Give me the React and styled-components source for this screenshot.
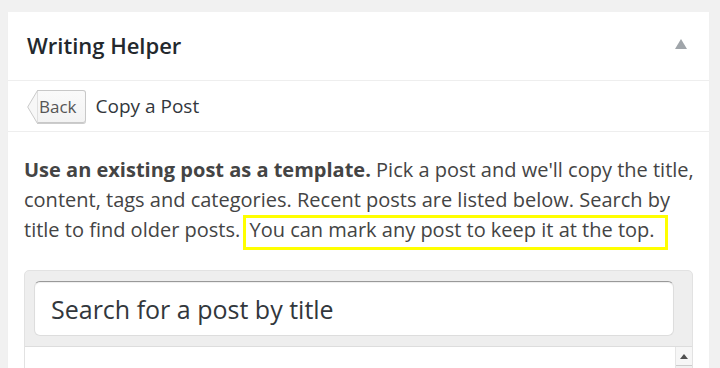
import styled, { createGlobalStyle } from "styled-components";

const GlobalStyle = createGlobalStyle`
  html, body {
    margin: 0;
    padding: 0;
    background: #f1f1f1;
    overflow: hidden;
  }
  body {
    font-family: "Open Sans", "Noto Sans", sans-serif;
    color: #444;
  }
`;

export default function App() {
  return (
    <>
      <GlobalStyle />
      <Page>
        <Panel>
          <Header>
            <Title>Writing Helper</Title>
            <Toggle aria-label="collapse" />
          </Header>
          <Nav>
            <BackButton>
              <BackArrow viewBox="0 0 11 35" preserveAspectRatio="none">
                <polygon points="11,0.5 10.5,0.5 0.7,17.5 10.5,34.5 11,34.5" fill="#f7f7f7" stroke="#c8c8c8" strokeWidth="1" />
              </BackArrow>
              Back
            </BackButton>
            <NavTitle>Copy a Post</NavTitle>
          </Nav>
          <Body>
            <Intro>
              <strong>Use an existing post as a template.</strong> Pick a post and
              we'll copy the title, content, tags and categories. Recent posts are
              listed below. Search by title to find older posts.{" "}
              <Highlight>You can mark any post to keep it at the top.</Highlight>
            </Intro>
            <SearchBox>
              <SearchBar>
                <SearchInput placeholder="Search for a post by title" />
              </SearchBar>
              <List>
                <Scrollbar>
                  <ScrollButton />
                </Scrollbar>
              </List>
            </SearchBox>
          </Body>
        </Panel>
      </Page>
    </>
  );
}

const Page = styled.div`
  padding: 12px 11px 0 8px;
`;

const Panel = styled.div`
  background: #fff;
  box-shadow: 0 1px 1px rgba(0, 0, 0, 0.04);
  min-height: 400px;
`;

const Header = styled.div`
  height: 68px;
  display: flex;
  align-items: center;
  justify-content: space-between;
  padding: 0 22px 0 19px;
  border-bottom: 1px solid #eee;
`;

const Title = styled.h2`
  margin: 0;
  font-size: 22px;
  font-weight: 600;
  color: #23282d;
  padding-bottom: 2px;
`;

const Toggle = styled.span`
  width: 0;
  height: 0;
  border-left: 6.5px solid transparent;
  border-right: 6.5px solid transparent;
  border-bottom: 10px solid #a0a5aa;
  margin-bottom: 4px;
`;

const Nav = styled.div`
  height: 50px;
  display: flex;
  align-items: center;
  gap: 10px;
  padding-left: 19px;
  border-bottom: 1px solid #eee;
`;

const BackButton = styled.span`
  position: relative;
  margin-left: 10px;
  height: 33px;
  box-sizing: border-box;
  display: inline-flex;
  align-items: center;
  padding: 0 8px 0 2px;
  border: 1px solid #c8c8c8;
  border-left: none;
  border-radius: 0 3px 3px 0;
  background: linear-gradient(#fafafa, #f3f3f3);
  box-shadow: 0 1px 0 #ccc;
  color: #555;
  font-size: 17px;
  margin-top: 1px;
`;

const BackArrow = styled.svg`
  position: absolute;
  left: -10px;
  top: -1px;
  width: 11px;
  height: 34px;
`;

const NavTitle = styled.span`
  font-size: 19px;
  color: #32373c;
`;

const Body = styled.div`
  padding: 23px 16px 0 16px;
`;

const Intro = styled.p`
  margin: 0 -14px 20px 0;
  font-size: 20px;
  line-height: 30px;
  color: #444;
  strong {
    font-weight: 700;
  }
`;

const Highlight = styled.span`
  display: inline-block;
  line-height: 24px;
  border: 3px solid #ffff00;
  padding: 0 10px 5px 3px;
  margin-left: -2px;
`;

const SearchBox = styled.div`
  background: #eee;
  border: 1px solid #e2e2e2;
  border-radius: 5px 5px 0 0;
`;

const SearchBar = styled.div`
  padding: 10px 18px 10px 9px;
`;

const SearchInput = styled.input`
  display: block;
  width: 100%;
  box-sizing: border-box;
  height: 55px;
  border: 1px solid #ddd;
  border-top-color: #999;
  border-radius: 6px;
  background: #fff;
  padding: 0 16px;
  font-family: "Open Sans", "Noto Sans", sans-serif;
  font-size: 25px;
  color: #32373c;
  outline: none;
  box-shadow: inset 0 1px 1px rgba(0, 0, 0, 0.07);
  &::placeholder {
    color: #32373c;
    opacity: 1;
  }
`;

const List = styled.div`
  background: #fff;
  height: 120px;
  border-top: 1px solid #ddd;
  display: flex;
  justify-content: flex-end;
`;

const Scrollbar = styled.div`
  width: 16px;
  background: #f1f1f1;
  border-left: 1px solid #e5e5e5;
`;

const ScrollButton = styled.div`
  height: 18px;
  border-bottom: 1px solid #ccc;
  background: #f6f6f6;
  display: flex;
  align-items: center;
  justify-content: center;
  &::after {
    content: "";
    border-left: 4px solid transparent;
    border-right: 4px solid transparent;
    border-bottom: 5px solid #505050;
  }
`;
